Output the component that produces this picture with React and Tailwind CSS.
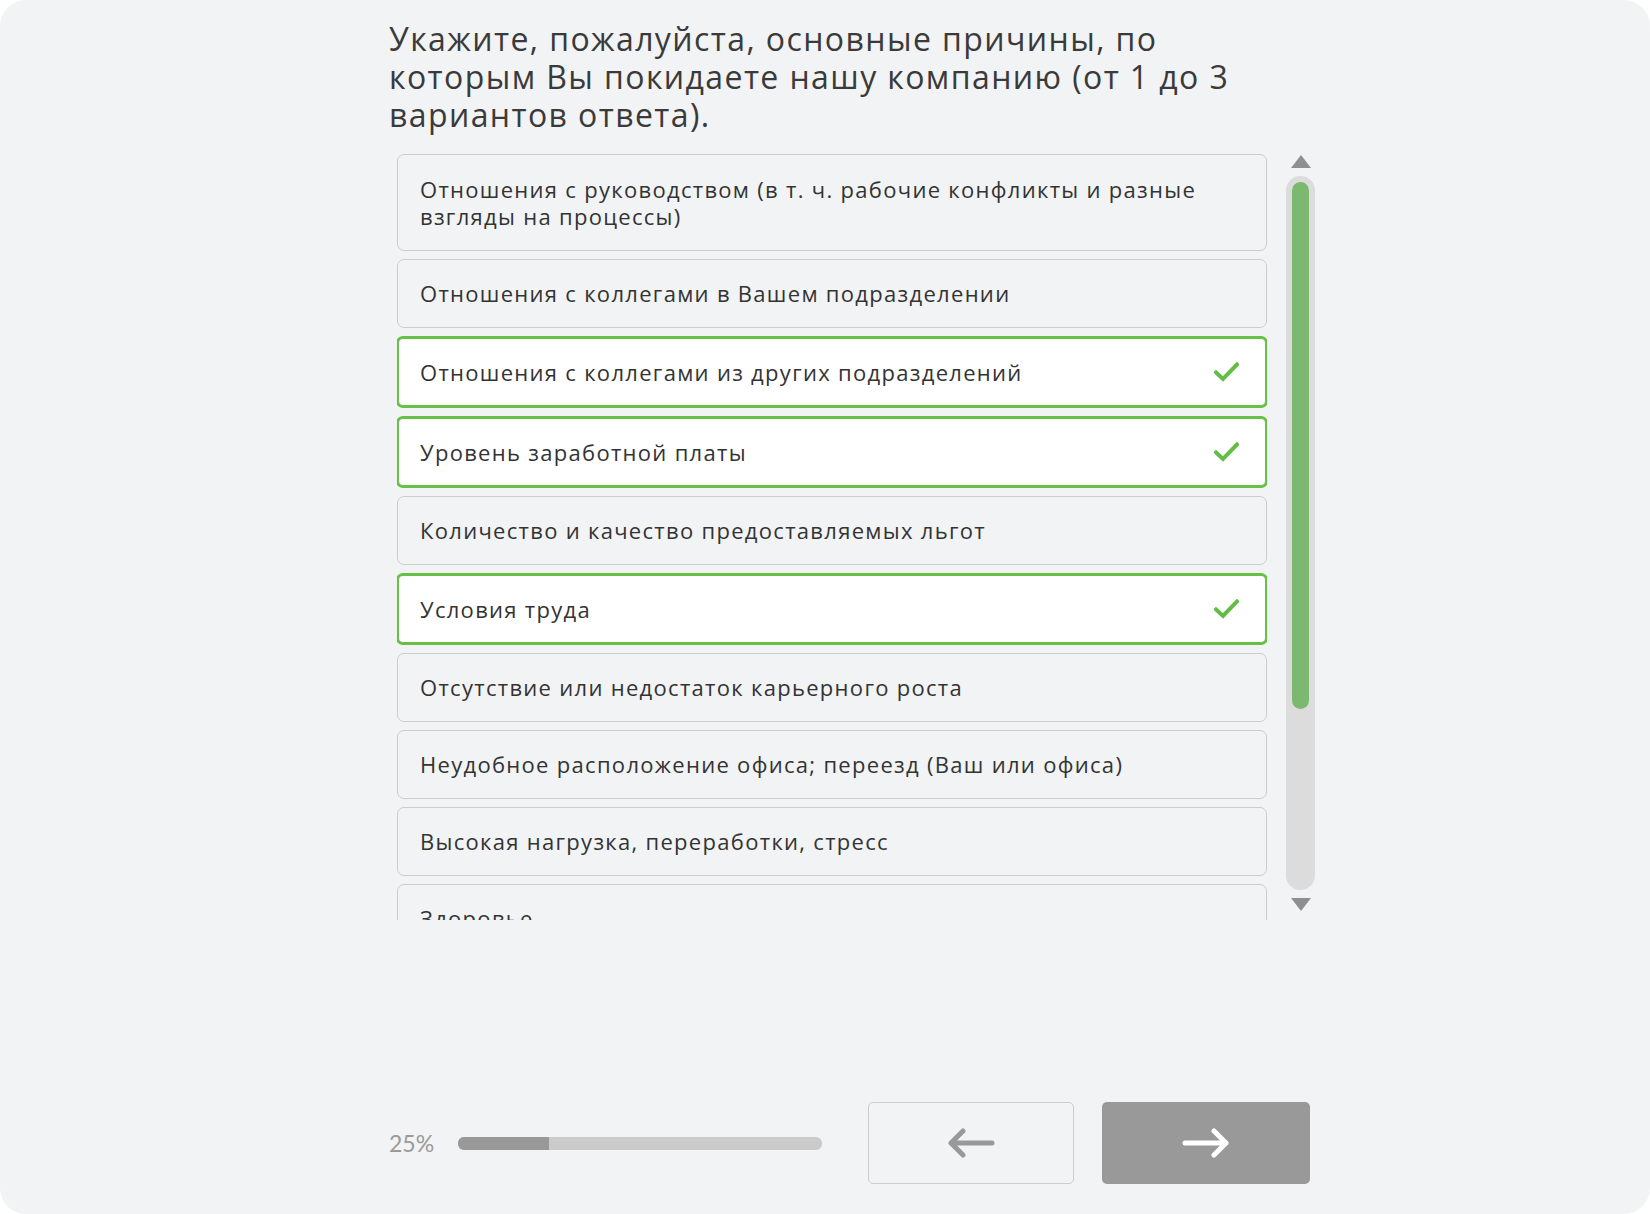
import React from "react";

const options = [
  { text: ["Отношения с руководством (в т. ч. рабочие конфликты и разные", "взгляды на процессы)"] },
  { text: ["Отношения с коллегами в Вашем подразделении"] },
  { text: ["Отношения с коллегами из других подразделений"], checked: true },
  { text: ["Уровень заработной платы"], checked: true },
  { text: ["Количество и качество предоставляемых льгот"] },
  { text: ["Условия труда"], checked: true },
  { text: ["Отсутствие или недостаток карьерного роста"] },
  { text: ["Неудобное расположение офиса; переезд (Ваш или офиса)"] },
  { text: ["Высокая нагрузка, переработки, стресс"] },
  { text: ["Здоровье"] },
];

function Check() {
  return (
    <svg width="25" height="20" viewBox="0 0 25 20" fill="none">
      <path d="M2 10.5 L9 17 L23 2.5" stroke="#62bd45" strokeWidth="4" strokeLinecap="square" strokeLinejoin="miter" />
    </svg>
  );
}

function Option({ text, checked }) {
  return (
    <div
      className={
        checked
          ? "-mx-[1px] flex items-center justify-between rounded-[7px] border-[3px] border-[#66c144] bg-white pl-[21px] pr-[26px] py-[20.5px]"
          : "flex items-center justify-between rounded-[7px] border border-[#cccccc] bg-[#f2f3f5] pl-[22px] pr-[27px] py-[21px]"
      }
    >
      <div
        className={
          text.length > 1
            ? "text-[22px] leading-[26.5px] tracking-[1.3px] text-[#333]"
            : "text-[22px] leading-[25px] tracking-[1.3px] text-[#333]"
        }
      >
        {text.map((t, i) => (
          <React.Fragment key={i}>
            {i > 0 && <br />}
            {t}
          </React.Fragment>
        ))}
      </div>
      {checked && <Check />}
    </div>
  );
}

export default function App() {
  return (
    <div className="w-[1650px] h-[1214px] bg-white" style={{ fontFamily: "'Open Sans', 'Noto Sans', sans-serif" }}>
      <div className="h-full rounded-[26px] bg-[#f2f3f5] flex flex-col pl-[389px]">
        <div className="w-[926px] flex flex-col h-full">
          <h1 className="pt-[20px] text-[32px] leading-[38px] tracking-[1.4px] text-[#3a3a3a]">
            Укажите, пожалуйста, основные причины, по<br />
            которым Вы покидаете нашу компанию (от 1 до 3<br />
            вариантов ответа).
          </h1>

          <div className="mt-[20px] flex">
            <div className="ml-[8px] w-[870px] h-[766px] overflow-hidden">
              <div className="flex flex-col gap-[8px]">
                {options.map((o, i) => (
                  <Option key={i} {...o} />
                ))}
              </div>
            </div>

            <div className="ml-[19px] w-[29px] flex flex-col items-center pt-[1px]">
              <div className="w-0 h-0 border-l-[10px] border-r-[10px] border-b-[13px] border-l-transparent border-r-transparent border-b-[#8f8f8f]" />
              <div className="mt-[8px] w-[29px] h-[714px] rounded-full bg-[#dcdcdc] p-[6px]">
                <div className="w-full h-[527px] rounded-full bg-[#7cb870]" />
              </div>
              <div className="mt-[8px] w-0 h-0 border-l-[10px] border-r-[10px] border-t-[13px] border-l-transparent border-r-transparent border-t-[#8f8f8f]" />
            </div>
          </div>

          <div className="mt-auto mb-[30px] flex items-center">
            <span className="w-[43px] text-[23px] text-[#9a9a9a]" style={{ fontFamily: "Lato, sans-serif" }}>25%</span>
            <div className="ml-[26px] w-[364px] h-[13px] rounded-[6px] bg-[#cbcbcb] overflow-hidden">
              <div className="w-[91px] h-full bg-[#999999]" />
            </div>
            <button className="ml-[46px] w-[206px] h-[82px] rounded-[5px] border border-[#cccccc] bg-[#f2f3f5] flex items-center justify-center">
              <svg width="48" height="30" viewBox="0 0 48 30" fill="none">
                <path d="M45 15 H4 M16 3 L4 15 L16 27" stroke="#999999" strokeWidth="5" strokeLinecap="round" strokeLinejoin="round" />
              </svg>
            </button>
            <button className="ml-[28px] w-[208px] h-[82px] rounded-[5px] bg-[#999999] flex items-center justify-center">
              <svg width="48" height="30" viewBox="0 0 48 30" fill="none">
                <path d="M3 15 H44 M32 3 L44 15 L32 27" stroke="#ffffff" strokeWidth="5" strokeLinecap="round" strokeLinejoin="round" />
              </svg>
            </button>
          </div>
        </div>
      </div>
    </div>
  );
}
